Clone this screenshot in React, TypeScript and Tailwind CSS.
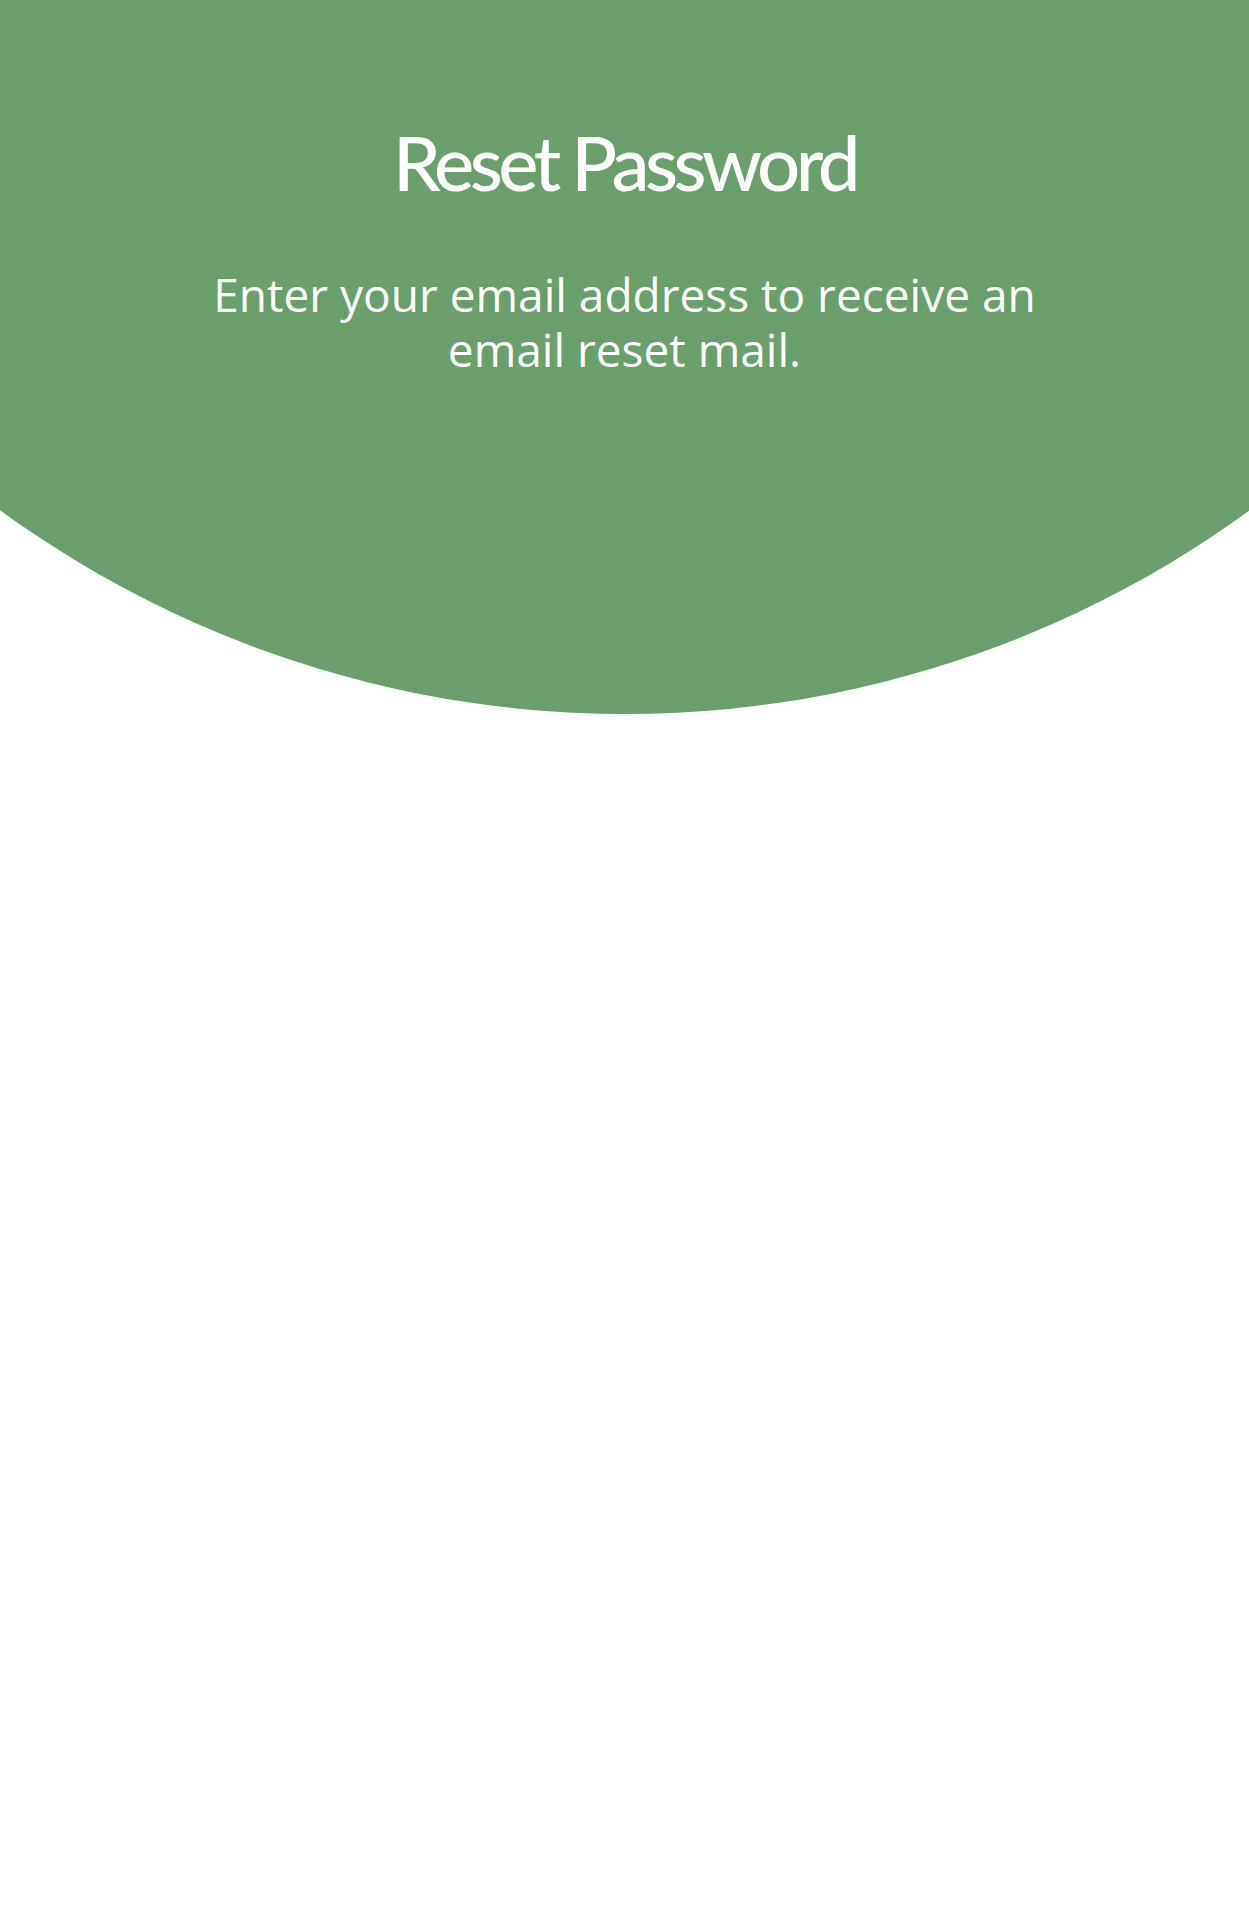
import React from "react";

export default function App() {
  return (
    <div className="min-h-[1920px] w-full bg-white">
      <header className="relative h-[714px] overflow-hidden">
        <div className="absolute bottom-0 left-1/2 h-[2120px] w-[2120px] -translate-x-1/2 rounded-full bg-[#6a9e6c]" />
        <div className="relative flex flex-col items-center pt-[123px] text-white">
          <h1 className="text-[76px] leading-[77px] font-medium tracking-[-4.5px] font-['Lato',sans-serif]">
            Reset Password
          </h1>
          <p className="mt-[67px] text-center text-[46px] leading-[55px] font-['Open_Sans',sans-serif]">
            Enter your email address to receive an
            <br />
            email reset mail.
          </p>
        </div>
      </header>
    </div>
  );
}
